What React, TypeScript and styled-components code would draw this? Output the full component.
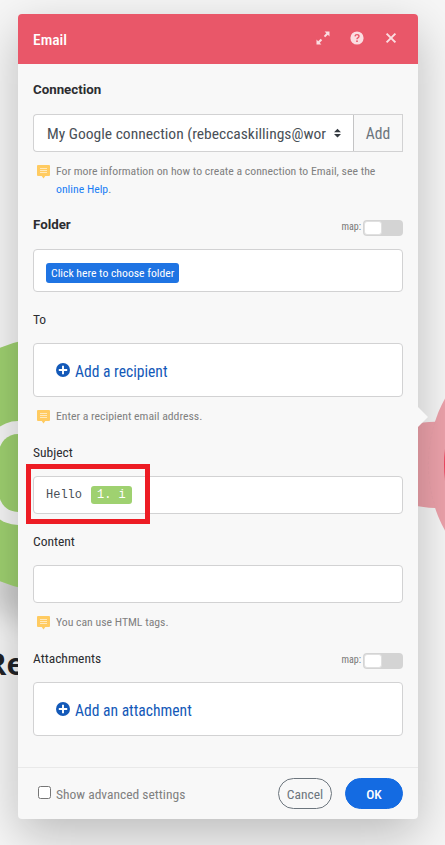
import React from 'react';
import styled, { createGlobalStyle } from 'styled-components';

const GlobalStyle = createGlobalStyle`
  *, *::before, *::after { box-sizing: border-box; }
  body {
    margin: 0;
    background: #f6f6f6;
    font-family: Roboto, sans-serif;
    font-stretch: 80%;
    font-size: 13.5px;
    color: #2c2d30;
  }
  button, select, input { font: inherit; font-stretch: inherit; }
`;

const Scene = styled.div`
  position: relative;
  width: 445px;
  height: 845px;
  overflow: hidden;
  padding: 14px 27px 26px 18px;
`;

const Canvas = styled.svg`
  position: absolute;
  inset: 0;
`;

const ModuleName = styled.div`
  position: absolute;
  left: -14px;
  top: 642px;
  font-family: "Open Sans", sans-serif;
  font-size: 31px;
  line-height: 42px;
  font-weight: 700;
  font-stretch: 100%;
  color: #212327;
`;

const Panel = styled.section`
  position: relative;
  display: flex;
  flex-direction: column;
  width: 400px;
  height: 805px;
  border-radius: 4px;
  background: #f8f8f8;
  box-shadow: 0 16px 48px rgba(0, 0, 0, 0.24);
`;

const Pointer = styled.svg`
  position: absolute;
  left: 400px;
  top: 393px;
`;

const Header = styled.header`
  display: flex;
  align-items: center;
  height: 50px;
  padding: 0 20px 0 15px;
  border-radius: 4px 4px 0 0;
  background: #e95769;
`;

const Title = styled.h1`
  flex: 1;
  margin: 2px 0 0;
  font-size: 15.5px;
  line-height: 24px;
  font-weight: 500;
  color: #fff;
`;

const HeaderActions = styled.div`
  display: flex;
  align-items: center;
  gap: 20px;
  margin-top: -2px;
`;

const IconButton = styled.button`
  display: flex;
  width: 14px;
  height: 14px;
  padding: 0;
  border: 0;
  background: none;
  color: #fbdde1;
`;

const Body = styled.div`
  display: flex;
  flex: 1;
  flex-direction: column;
  gap: 15px;
  padding: 14px 15px 0;
`;

const Field = styled.div`
  display: flex;
  flex-direction: column;
`;

const LabelRow = styled.div`
  display: flex;
  align-items: center;
  justify-content: space-between;
  height: 24px;
  margin-bottom: 12px;
`;

const Label = styled.label<{ $strong?: boolean }>`
  font-size: ${(p) => (p.$strong ? 13.3 : 13.5)}px;
  line-height: 24px;
  font-weight: ${(p) => (p.$strong ? 700 : 400)};
  font-stretch: ${(p) => (p.$strong ? '100%' : '80%')};
`;

const MapToggle = styled.div`
  display: flex;
  align-items: center;
  gap: 2px;
  margin-top: 5px;
  font-size: 10px;
  line-height: 16px;
  color: #777;

  > :first-child { margin-top: -2px; }
`;

const Track = styled.span`
  display: block;
  width: 40px;
  height: 16px;
  padding: 1px;
  border-radius: 4px;
  background: #d4d4d4;
`;

const Thumb = styled.span`
  display: block;
  width: 18px;
  height: 14px;
  border: 1px solid #e0e0e0;
  border-radius: 3px;
  background: #fff;
`;

const Box = styled.div<{ $height: number; $inset?: number }>`
  display: flex;
  align-items: center;
  height: ${(p) => p.$height}px;
  padding-left: ${(p) => p.$inset ?? 12}px;
  border: 1px solid #d2d2d3;
  border-radius: 4px;
  background: #fff;
`;

const SelectGroup = styled.div`
  display: flex;
  height: 38px;
`;

const SelectBox = styled.div`
  display: flex;
  align-items: center;
  width: 321px;
  padding: 2px 12px 0 13px;
  border: 1px solid #d2d2d3;
  border-right: 1px solid #c4c4c5;
  border-radius: 4px 0 0 4px;
  background: #fff;
  color: #495057;
  font-size: 15.55px;
  line-height: 24px;

  svg { margin-bottom: 2px; }
`;

const SelectText = styled.span`
  flex: none;
  width: 287px;
  white-space: nowrap;
`;

const AddButton = styled.button`
  flex: 1;
  padding: 2px 0 0;
  border: 1px solid #d2d2d3;
  border-left: 0;
  background: #f8f8f8;
  color: #6c757d;
  font-size: 15.6px;
  line-height: 24px;
`;

const Hint = styled.div`
  display: flex;
  gap: 6px;
  padding: 10px 0 0 4px;
  font-size: 11.75px;
  line-height: 18px;
  color: #808080;
  white-space: nowrap;

  svg { flex: none; margin-top: 3px; }
`;

const Link = styled.a`
  color: #1b7ef5;
`;

const FolderButton = styled.button`
  height: 20px;
  margin-top: 5px;
  padding: 0 5px;
  border: 0;
  border-radius: 3px;
  background: #1f74e3;
  color: #fff;
  font-size: 11.7px;
  line-height: 20px;
  font-weight: 400;
  white-space: nowrap;
`;

const AddLink = styled.button`
  display: flex;
  align-items: center;
  gap: 5px;
  padding: 0;
  border: 0;
  background: none;
  color: #1359b8;
  font-size: 15.6px;
  line-height: 24px;

  svg { margin-bottom: 1px; }
  span { margin-top: 3px; }
`;

const Formula = styled.div`
  display: flex;
  align-items: center;
  gap: 9px;
  font-family: "Liberation Mono", monospace;
  font-size: 12px;
  line-height: 18px;
  color: #495057;
`;

const Token = styled.span`
  height: 18px;
  padding: 0 6px;
  border-radius: 3px;
  background: #9fd170;
  color: #fff;
  white-space: pre;
`;

const Highlight = styled.div`
  position: absolute;
  left: 8px;
  top: 450px;
  width: 124px;
  height: 60px;
  border: 5px solid #ed1c24;
  pointer-events: none;
`;

const Footer = styled.footer`
  display: flex;
  align-items: center;
  height: 52px;
  padding: 0 15px 0 20px;
  border-top: 1px solid #e9e9e9;
`;

const Advanced = styled.label`
  display: flex;
  flex: 1;
  align-items: center;
  gap: 5px;
  color: #808080;
`;

const Checkbox = styled.input`
  width: 13px;
  height: 13px;
  margin: 0 0 3px;
`;

const ActionButton = styled.button<{ $primary?: boolean }>`
  width: ${(p) => (p.$primary ? 58 : 54)}px;
  height: 31px;
  margin-left: ${(p) => (p.$primary ? 13 : 0)}px;
  padding: 0;
  border: 1px solid ${(p) => (p.$primary ? '#146be2' : '#6c757d')};
  border-radius: 16px;
  background: ${(p) => (p.$primary ? '#146be2' : 'transparent')};
  color: ${(p) => (p.$primary ? '#fff' : '#6c757d')};
  font-weight: ${(p) => (p.$primary ? 500 : 400)};
`;

const NoteIcon = () => (
  <svg width="13" height="14" viewBox="0 0 13 14">
    <path d="M1 0h11a1 1 0 0 1 1 1v9a1 1 0 0 1-1 1H8.3L6.5 13.4 4.7 11H1a1 1 0 0 1-1-1V1a1 1 0 0 1 1-1z" fill="#ffcb61" />
    <path d="M3 3.5h7M3 5.5h7M3 7.5h7" stroke="#ffe9bd" strokeWidth="1" />
  </svg>
);

const PlusIcon = () => (
  <svg width="14" height="14" viewBox="0 0 14 14">
    <circle cx="7" cy="7" r="7" fill="#1359b8" />
    <path d="M7 2.8v8.4M2.8 7h8.4" stroke="#fff" strokeWidth="1.9" />
  </svg>
);

const MapSwitch = () => (
  <MapToggle>
    <span>map:</span>
    <Track><Thumb /></Track>
  </MapToggle>
);

export default function App() {
  return (
    <>
      <GlobalStyle />
      <Scene>
        <Canvas width="445" height="845" viewBox="0 0 445 845">
          <defs>
            <filter id="soft" x="-50%" y="-50%" width="200%" height="200%"><feGaussianBlur stdDeviation="14" /></filter>
          </defs>
          <ellipse cx="54" cy="590" rx="70" ry="34" fill="#000" opacity="0.16" filter="url(#soft)" />
          <circle cx="50" cy="464.5" r="127" fill="#9fd170" />
          <rect x="-14" y="421" width="120" height="104" rx="32" fill="#f6f6f6" />
          <rect x="-1" y="434" width="100" height="78" rx="19" fill="#9fd170" />
          <path d="M400 432Q410 422 435 421.8H460V508H435Q410 507 400 498z" fill="#eda2ab" />
          <circle cx="565" cy="464.5" r="137" fill="#eda2ab" />
          <path d="M435.2 422A137 137 0 0 0 435.2 507" fill="none" stroke="#e6a0a8" strokeWidth="0.6" strokeDasharray="3 2" />
          <circle cx="568" cy="464.5" r="124" fill="#ee4560" />
        </Canvas>
        <ModuleName>Re</ModuleName>
        <Panel>
          <Pointer width="10" height="20" viewBox="0 0 10 20"><path d="M0 0l10 10L0 20z" fill="#f8f8f8" /></Pointer>
          <Header>
            <Title>Email</Title>
            <HeaderActions>
              <IconButton aria-label="Expand">
                <svg width="14" height="14" viewBox="0 0 14 14" fill="currentColor">
                  <path d="M8.6 .5h4.9v4.9L11.8 3.7 9.2 6.3 7.8 4.9 10.3 2.3zM5.4 13.5H.5V8.6l1.7 1.7 2.5-2.5 1.5 1.5-2.5 2.5z" />
                </svg>
              </IconButton>
              <IconButton aria-label="Help">
                <svg width="14" height="14" viewBox="0 0 14 14">
                  <circle cx="7" cy="7" r="6.6" fill="currentColor" />
                  <path d="M5 5.4Q5.2 3.6 7 3.6Q9 3.6 9 5.2Q9 6.3 7.9 6.8Q7 7.2 7 8.3" fill="none" stroke="#e95769" strokeWidth="1.4" />
                  <circle cx="7" cy="10.2" r="0.9" fill="#e95769" />
                </svg>
              </IconButton>
              <IconButton aria-label="Close">
                <svg width="14" height="14" viewBox="0 0 14 14">
                  <path d="M2.6 2.6l8.8 8.8M11.4 2.6l-8.8 8.8" stroke="currentColor" strokeWidth="2" />
                </svg>
              </IconButton>
            </HeaderActions>
          </Header>
          <Body>
            <Field>
              <LabelRow><Label $strong>Connection</Label></LabelRow>
              <SelectGroup>
                <SelectBox>
                  <SelectText>My Google connection (rebeccaskillings@wor</SelectText>
                  <svg width="8" height="10" viewBox="0 0 8 10"><path d="M4 0l4 4H0zM4 10l4-4H0z" fill="#343a40" /></svg>
                </SelectBox>
                <AddButton>Add</AddButton>
              </SelectGroup>
              <Hint>
                <NoteIcon />
                <span>For more information on how to create a connection to Email, see the<br /><Link>online Help</Link>.</span>
              </Hint>
            </Field>
            <Field>
              <LabelRow><Label $strong>Folder</Label><MapSwitch /></LabelRow>
              <Box $height={43}><FolderButton>Click here to choose folder</FolderButton></Box>
            </Field>
            <Field>
              <LabelRow><Label>To</Label></LabelRow>
              <Box $height={54} $inset={22}><AddLink><PlusIcon /><span>Add a recipient</span></AddLink></Box>
              <Hint><NoteIcon /><span>Enter a recipient email address.</span></Hint>
            </Field>
            <Field>
              <LabelRow><Label>Subject</Label></LabelRow>
              <Box $height={38}><Formula>Hello<Token>1. i</Token></Formula></Box>
            </Field>
            <Field>
              <LabelRow><Label>Content</Label></LabelRow>
              <Box $height={38} />
              <Hint><NoteIcon /><span>You can use HTML tags.</span></Hint>
            </Field>
            <Field>
              <LabelRow><Label>Attachments</Label><MapSwitch /></LabelRow>
              <Box $height={54} $inset={22}><AddLink><PlusIcon /><span>Add an attachment</span></AddLink></Box>
            </Field>
          </Body>
          <Footer>
            <Advanced><Checkbox type="checkbox" /><span>Show advanced settings</span></Advanced>
            <ActionButton>Cancel</ActionButton>
            <ActionButton $primary>OK</ActionButton>
          </Footer>
          <Highlight />
        </Panel>
      </Scene>
    </>
  );
}
